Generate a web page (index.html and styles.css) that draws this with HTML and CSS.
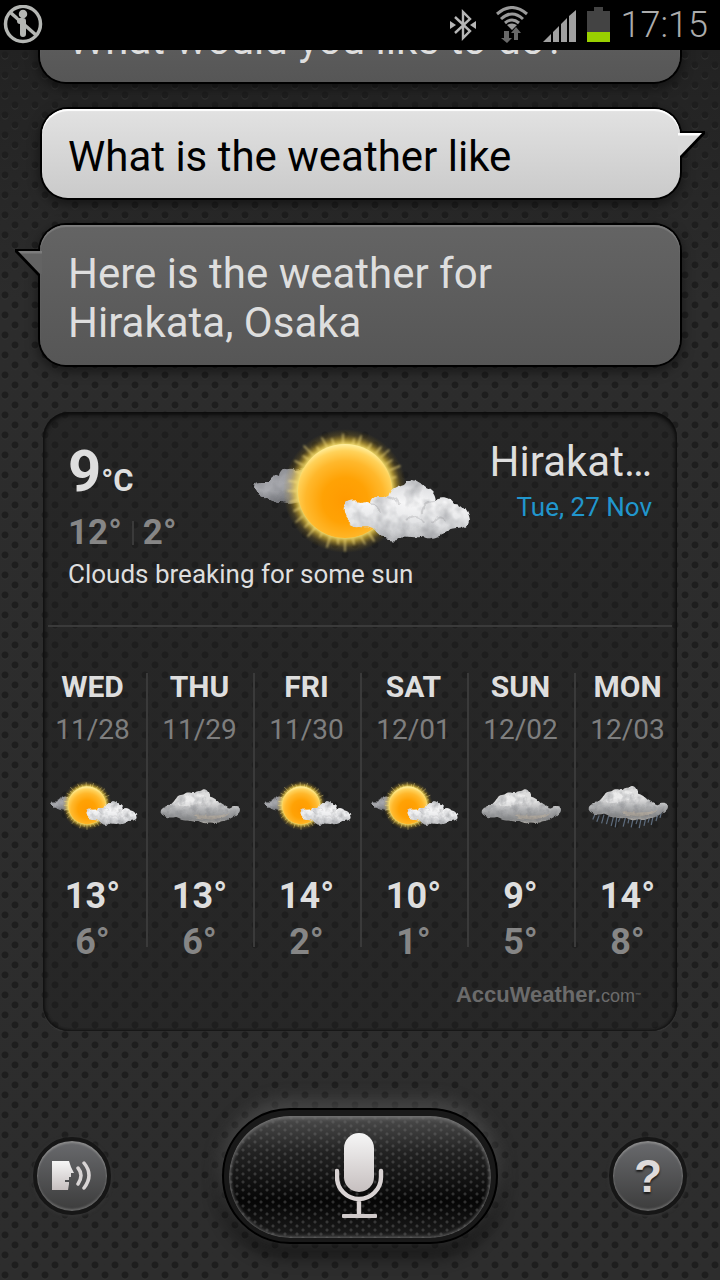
FILE: index.html
```html
<!DOCTYPE html>
<html lang="en">
<head>
    <meta charset="UTF-8">
    <meta name="viewport" content="width=device-width, initial-scale=1.0">
    <title>Voice assistant</title>
    <link rel="stylesheet" href="styles.css">
</head>
<body>
    <!-- shared weather icons -->
    <svg class="defs" width="0" height="0" aria-hidden="true">
        <defs>
            <radialGradient id="sun-fill" cx="0.5" cy="0.6" r="0.6">
                <stop offset="0" stop-color="#ff9a00"/>
                <stop offset="0.4" stop-color="#ffa205"/>
                <stop offset="0.7" stop-color="#ffb82c"/>
                <stop offset="0.88" stop-color="#ffd25a"/>
                <stop offset="1" stop-color="#fff0a0"/>
            </radialGradient>
            <radialGradient id="sun-glow">
                <stop offset="0.74" stop-color="#ffe97a" stop-opacity="1"/>
                <stop offset="0.82" stop-color="#f0c838" stop-opacity="0.6"/>
                <stop offset="0.91" stop-color="#c09820" stop-opacity="0.2"/>
                <stop offset="1" stop-color="#a08010" stop-opacity="0"/>
            </radialGradient>
            <linearGradient id="white-cloud" x1="0" y1="0" x2="0" y2="1">
                <stop offset="0" stop-color="#d6d7da"/>
                <stop offset="0.4" stop-color="#f6f6f7"/>
                <stop offset="0.75" stop-color="#e2e3e5"/>
                <stop offset="1" stop-color="#b4b5b8"/>
            </linearGradient>
            <linearGradient id="back-cloud" x1="0" y1="0" x2="0" y2="1">
                <stop offset="0" stop-color="#96979c"/>
                <stop offset="0.6" stop-color="#aaabb0"/>
                <stop offset="1" stop-color="#707176"/>
            </linearGradient>
            <linearGradient id="gray-cloud" gradientUnits="userSpaceOnUse" x1="0" y1="30" x2="0" y2="118">
                <stop offset="0" stop-color="#d8d8d8"/>
                <stop offset="0.35" stop-color="#e2e2e2"/>
                <stop offset="0.6" stop-color="#b0b1b3"/>
                <stop offset="0.85" stop-color="#8a8b8c"/>
                <stop offset="1" stop-color="#b4b0aa"/>
            </linearGradient>
            <filter id="fluff" x="-10%" y="-10%" width="120%" height="120%" color-interpolation-filters="sRGB">
                <feTurbulence type="fractalNoise" baseFrequency="0.06" numOctaves="3" seed="4" result="noise"/>
                <feDisplacementMap in="SourceGraphic" in2="noise" scale="8" xChannelSelector="R" yChannelSelector="G" result="rough"/>
                <feGaussianBlur in="rough" stdDeviation="0.6" result="shape"/>
                <feColorMatrix in="noise" type="matrix" values="0 0 0 0 0.45  0 0 0 0 0.46  0 0 0 0 0.48  0.9 0 0 0 -0.36" result="shade"/>
                <feComposite in="shade" in2="shape" operator="in" result="inner"/>
                <feMerge>
                    <feMergeNode in="shape"/>
                    <feMergeNode in="inner"/>
                </feMerge>
            </filter>
            <filter id="soft" x="-10%" y="-10%" width="120%" height="120%">
                <feGaussianBlur stdDeviation="0.8"/>
            </filter>
            <symbol id="partly-sunny" viewBox="0 0 240 140">
                <g filter="url(#fluff)" fill="url(#back-cloud)">
                    <path d="M13 68C14 60 22 61 28 61C30 55 37 56 40 58C41 50 50 47 54 50L64 48V82C56 82 48 86 42 83C35 84 30 78 26 77C20 78 13 74 13 68Z"/>
                </g>
                <circle cx="105" cy="71" r="62" fill="url(#sun-glow)"/>
                <g fill="none" stroke="#ffe888" stroke-width="1.5" stroke-linecap="round" opacity="0.7" filter="url(#soft)">
                    <path d="M103 24V14M113 25L114 19M118 26L121 16M128 29L131 24M136 33L141 27M141 37L149 30M146 44L152 40M150 50L160 46M152 58L156 57M94 25L92 19M87 27L82 18M79 30L77 27M73 35L64 26M68 39L63 36M63 45L55 41M60 53L55 51M57 62L49 61M56 71H48M57 80L50 82M60 88L54 91M63 96L56 102M69 103L65 107M75 108L68 116M82 113L80 117M90 117L87 127M98 119V124M105 120V131M113 119L114 124M121 117L125 124M129 113L134 121"/>
                </g>
                <circle cx="105" cy="71" r="47" fill="url(#sun-fill)"/>
                <g filter="url(#fluff)">
                    <path fill="url(#white-cloud)" d="M104 94C102 84 111 79 120 82C124 80 129 83 130 84C130 75 141 73 147 77C150 66 158 66 164 64C170 56 178 61 185 66C193 69 196 77 194 80C201 75 210 77 214 84C224 84 228 94 229 101C228 111 215 107 207 112C198 117 190 121 183 116C172 120 164 113 157 119C146 122 138 113 134 108C128 104 125 106 119 105C111 106 105 101 104 94Z"/>
                    <path fill="none" stroke="#a9aaad" stroke-width="2" opacity="0.4" d="M130 84C136 84 140 88 141 93M147 77C153 78 157 82 157 87M194 80C187 80 181 86 182 93M166 100C173 94 182 98 184 104M207 100C202 95 195 98 193 104"/>
                </g>
            </symbol>
            <symbol id="cloud-shape" viewBox="0 0 240 140">
                <g filter="url(#fluff)">
                    <path fill="url(#gray-cloud)" d="M22 89C20 78 34 75 40 70C50 70 56 58 62 51C66 43 78 47 84 40C94 36 101 43 108 39C114 32 120 38 127 31C138 28 142 40 144 49C155 51 162 58 169 65C180 68 185 77 195 76C205 70 220 72 220 82C220 93 205 98 196 104C186 112 176 109 169 113C158 117 149 112 142 114C132 119 122 113 114 109C104 114 96 108 86 109C73 108 69 101 59 100C46 104 25 100 22 89Z"/>
                    <path fill="#ffffff" opacity="0.4" d="M64 58C80 42 110 40 130 46C138 56 130 66 116 66C98 68 88 76 66 72Z"/>
                    <path fill="#c7b7a1" opacity="0.5" d="M104 98C120 92 138 100 156 96C172 97 182 92 194 90C184 104 166 102 150 107C136 104 120 106 104 98Z"/>
                </g>
            </symbol>
            <symbol id="cloudy" viewBox="0 0 240 140">
                <use href="#cloud-shape" width="240" height="140"/>
            </symbol>
            <symbol id="rain" viewBox="0 0 240 140">
                <path stroke="#71849b" stroke-width="3" opacity="0.75" d="M38 92L32 106M48 96L42 112M60 94L54 116M72 96L66 118M84 98L78 122M92 100L88 126M102 98L96 112M114 100L108 124M124 98L120 116M134 98L128 126M146 98L140 118M154 98L148 128M166 96L160 122M176 94L170 114M184 92L178 120M196 88L190 110M204 86L200 102"/>
                <use href="#cloud-shape" y="-8" width="240" height="140"/>
            </symbol>
            <linearGradient id="silver" x1="0" y1="0" x2="0" y2="1">
                <stop offset="0" stop-color="#f6f6f6"/>
                <stop offset="1" stop-color="#c6bfbf"/>
            </linearGradient>
        </defs>
    </svg>

    <header class="status-bar">
        <svg class="status-alert" width="40" height="40" viewBox="0 0 40 40" fill="none" stroke="#b4b6b3">
            <circle cx="20" cy="19" r="17.5" stroke-width="3.5"/>
            <path d="M8 8L33 30" stroke-width="3.5"/>
            <circle cx="20" cy="9" r="5" fill="#b4b6b3" stroke="#000" stroke-width="1.5"/>
            <path d="M17 16H20V29" stroke-width="6" stroke-linecap="round" stroke-linejoin="round"/>
        </svg>
        <svg width="34" height="36" viewBox="0 0 34 36" fill="none" stroke="#b6b6b6" stroke-width="2.4">
            <path d="M8 10L23 24L16 31V5L23 12L8 26"/>
            <path d="M3 14L9 18L3 22ZM29 14L23 18L29 22Z" fill="#b6b6b6" stroke="none"/>
        </svg>
        <svg width="42" height="38" viewBox="0 0 42 38" fill="none" stroke="#9a9a9a" stroke-width="3">
            <path d="M6 8Q21 -5 36 8M10 13Q21 3 32 13M14 17Q21 11 28 17"/>
            <path d="M16 19Q21 16 26 19L21 24Z" fill="#9a9a9a" stroke="none"/>
            <path d="M13 25H18V32H21L16 37L10 32H13ZM23 34V27H20L25 21L30 27H27V34Z" fill="#686868" stroke="none"/>
        </svg>
        <svg width="34" height="34" viewBox="0 0 34 34" fill="#a0a0a0">
            <path d="M0 34L8 26V34ZM10 24L16 18V34H10ZM18 16L24 10V34H18ZM26 8L33 2V34H26Z"/>
        </svg>
        <svg width="24" height="36" viewBox="0 0 24 36">
            <path d="M0 4H7V0H16V4H23V25H0Z" fill="#434343"/>
            <path d="M0 25H23V35H0Z" fill="#99d000"/>
        </svg>
        <time class="clock">17:15</time>
    </header>

    <main class="chat">
        <p class="bubble bubble-app">What would you like to do?</p>
        <p class="bubble bubble-user">What is the weather like</p>
        <p class="bubble bubble-app bubble-tail">Here is the weather for<br>Hirakata, Osaka</p>

        <section class="weather">
            <div class="today">
                <div class="temps">
                    <div class="now">9<span class="unit">°C</span></div>
                    <div class="range"><span>12°</span><span class="range-low">2°</span></div>
                </div>
                <svg class="today-icon" viewBox="0 0 240 140"><use href="#partly-sunny"/></svg>
                <div class="place">
                    <h1 class="city">Hirakat…</h1>
                    <div class="today-date">Tue, 27 Nov</div>
                </div>
                <p class="summary">Clouds breaking for some sun</p>
            </div>

            <div class="forecast">
                <div class="day">
                    <h2 class="day-name">WED</h2>
                    <div class="day-date">11/28</div>
                    <svg class="day-icon" viewBox="0 0 240 140"><use href="#partly-sunny"/></svg>
                    <div class="high">13°</div>
                    <div class="low">6°</div>
                </div>
                <div class="day">
                    <h2 class="day-name">THU</h2>
                    <div class="day-date">11/29</div>
                    <svg class="day-icon" viewBox="0 0 240 140"><use href="#cloudy"/></svg>
                    <div class="high">13°</div>
                    <div class="low">6°</div>
                </div>
                <div class="day">
                    <h2 class="day-name">FRI</h2>
                    <div class="day-date">11/30</div>
                    <svg class="day-icon" viewBox="0 0 240 140"><use href="#partly-sunny"/></svg>
                    <div class="high">14°</div>
                    <div class="low">2°</div>
                </div>
                <div class="day">
                    <h2 class="day-name">SAT</h2>
                    <div class="day-date">12/01</div>
                    <svg class="day-icon" viewBox="0 0 240 140"><use href="#partly-sunny"/></svg>
                    <div class="high">10°</div>
                    <div class="low">1°</div>
                </div>
                <div class="day">
                    <h2 class="day-name">SUN</h2>
                    <div class="day-date">12/02</div>
                    <svg class="day-icon" viewBox="0 0 240 140"><use href="#cloudy"/></svg>
                    <div class="high">9°</div>
                    <div class="low">5°</div>
                </div>
                <div class="day">
                    <h2 class="day-name">MON</h2>
                    <div class="day-date">12/03</div>
                    <svg class="day-icon" viewBox="0 0 240 140"><use href="#rain"/></svg>
                    <div class="high">14°</div>
                    <div class="low">8°</div>
                </div>
            </div>

            <div class="brand">AccuWeather.<span class="brand-com">com</span><span class="brand-tm">™</span></div>
        </section>
    </main>

    <footer class="controls">
        <button class="round-btn" type="button" aria-label="Voice feedback">
            <svg width="42" height="32" viewBox="0 0 42 32">
                <path d="M1 1H18L20 7L23 13H20V17H18V20H14V22H18V24L17 30H1Z" fill="url(#silver)"/>
                <path d="M27 8Q33 15 27 24M33 3Q43 15 33 28" fill="none" stroke="#d9d5d5" stroke-width="3.5" stroke-linecap="round"/>
            </svg>
        </button>
        <button class="mic-btn" type="button" aria-label="Speak">
            <span class="mic-face">
                <svg width="50" height="88" viewBox="0 0 50 88">
                    <rect x="9" y="0" width="30" height="59" rx="15" fill="url(#silver)"/>
                    <path d="M2 38V44A22 22 0 0 0 46 44V38M24 67V81" fill="none" stroke="#d9d3d3" stroke-width="4.4" stroke-linecap="round"/>
                    <rect x="7" y="81" width="35" height="4" rx="1" fill="#d0caca"/>
                </svg>
            </span>
        </button>
        <button class="round-btn" type="button" aria-label="Help">?</button>
    </footer>
</body>
</html>
```

FILE: styles.css
```css
* {
    box-sizing: border-box;
}

body {
    display: flex;
    flex-direction: column;
    height: 100vh;
    margin: 0;
    overflow: hidden;
    font-family: Roboto, sans-serif;
    color: #dedede;
    background:
        radial-gradient(circle at 5px 15px, #1e1e1e 3px, transparent 4px) 0 0 / 20px 20px,
        radial-gradient(circle at 15px 5px, #1e1e1e 3px, transparent 4px) 0 0 / 20px 20px,
        radial-gradient(circle at 5px 16px, #333 3px, transparent 4px) 0 0 / 20px 20px,
        radial-gradient(circle at 15px 6px, #333 3px, transparent 4px) 0 0 / 20px 20px,
        linear-gradient(#222 50px, #2c2c2c 300px, #2d2d2d);
}

h1, h2, p {
    margin: 0;
}

.defs {
    position: absolute;
}

/* status bar */
.status-bar {
    display: flex;
    align-items: center;
    gap: 10px;
    flex: none;
    height: 50px;
    padding: 0 12px 0 3px;
    background: #000;
}

.status-alert {
    margin-right: auto;
}

.clock {
    font-size: 36px;
    line-height: 42px;
    font-weight: 300;
    color: #acacac;
}

/* conversation */
.chat {
    display: flex;
    flex-direction: column;
    justify-content: flex-end;
    gap: 27px;
    flex: 1;
    min-height: 0;
    padding: 0 40px;
    overflow: hidden;
}

.bubble {
    position: relative;
    padding: 24px 28px 18px;
    border-radius: 26px;
    font-size: 42px;
    line-height: 49px;
}

.bubble-app {
    background: linear-gradient(#646464, #565656);
    box-shadow: 0 0 0 2px #000, inset 0 2px 1px #7c7c7c, 0 4px 12px 2px rgba(0, 0, 0, 0.5);
}

.bubble-user {
    margin-left: 2px;
    padding: 23px 26px 17px;
    color: #000;
    background: linear-gradient(#e2e2e2, #cacaca);
    box-shadow: 0 0 0 2px #000, inset 0 2px 1px #fff, 0 4px 12px 2px rgba(0, 0, 0, 0.5);
}

.bubble-user::before,
.bubble-user::after,
.bubble-tail::before,
.bubble-tail::after {
    content: "";
    position: absolute;
}

.bubble-user::before {
    top: 22px;
    right: -25px;
    width: 25px;
    height: 29px;
    background: #000;
    clip-path: polygon(0 0, 100% 0, 100% 3px, 0 100%);
}

.bubble-user::after {
    top: 24px;
    right: -22px;
    width: 24px;
    height: 24px;
    background: linear-gradient(#fff 2px, #d9d9d9 3px);
    clip-path: polygon(0 0, 100% 0, 2px 23px, 0 23px);
}

.bubble-tail::before {
    top: 24px;
    left: -25px;
    width: 25px;
    height: 29px;
    background: #000;
    clip-path: polygon(0 0, 100% 0, 100% 100%, 0 3px);
}

.bubble-tail::after {
    top: 26px;
    left: -22px;
    width: 24px;
    height: 24px;
    background: linear-gradient(#7c7c7c 2px, #636363 3px);
    clip-path: polygon(0 0, 100% 0, 100% 23px, 22px 23px);
}

/* weather card */
.weather {
    margin: 20px 3px 0;
    padding-top: 8px;
    border-radius: 26px;
    background: rgba(30, 30, 30, 0.4);
    box-shadow: inset 0 3px 5px #0c0c0c, inset 1px 0 3px #111, inset -1px 0 3px #111, 0 2px 0 #343434;
}

.today {
    display: grid;
    grid-template-columns: 1fr 240px 1fr;
    margin: 0 5px;
    padding: 0 20px 37px;
    border-bottom: 2px solid #3a3a3a;
}

.today-icon {
    width: 240px;
    height: 140px;
}

.temps {
    padding-top: 21px;
    font-weight: 700;
}

.now {
    font-size: 58px;
    line-height: 60px;
}

.unit {
    font-size: 31px;
}

.range {
    display: flex;
    align-items: center;
    margin-top: 2px;
    font-size: 35px;
    line-height: 40px;
    color: #868686;
}

.range-low {
    margin-left: 10px;
    padding-left: 11px;
    background: linear-gradient(#3a3a3a, #3a3a3a) no-repeat left center / 2px 24px;
}

.place {
    padding-top: 17px;
    text-align: right;
    white-space: nowrap;
}

.city {
    font-size: 42px;
    line-height: 50px;
    font-weight: 400;
}

.today-date {
    margin-top: 5px;
    font-size: 26px;
    line-height: 30px;
    color: #2196cd;
}

.summary {
    grid-column: 1 / -1;
    font-size: 26px;
    line-height: 28px;
}

.forecast {
    display: grid;
    grid-template-columns: repeat(6, 1fr);
    margin: 46px -4px 0;
}

.day {
    text-align: center;
}

.day + .day {
    background: linear-gradient(#3a3a3a, #3a3a3a) no-repeat left top / 2px 274px;
}

.day-name {
    font-size: 30px;
    line-height: 28px;
    font-weight: 700;
}

.day-date {
    margin-top: 13px;
    font-size: 28px;
    line-height: 32px;
    color: #7e7e7e;
}

.day-icon {
    display: block;
    width: 96px;
    height: 56px;
    margin: 31px auto 41px;
}

.high,
.low {
    font-size: 36px;
    line-height: 44px;
    font-weight: 700;
}

.low {
    margin-top: 2px;
    color: #868686;
}

.brand {
    padding: 18px 36px 22px;
    font-family: "Liberation Sans", sans-serif;
    font-size: 22px;
    line-height: 26px;
    font-weight: 700;
    text-align: right;
    color: #6b6b6b;
}

.brand-com {
    font-size: 18px;
    font-weight: 400;
}

.brand-tm {
    font-size: 6px;
    vertical-align: top;
}

/* bottom buttons */
.controls {
    display: flex;
    align-items: center;
    justify-content: space-between;
    flex: none;
    padding: 77px 33px 36px;
}

.round-btn {
    display: flex;
    align-items: center;
    justify-content: center;
    width: 78px;
    height: 78px;
    padding: 0;
    border: 4px solid #161616;
    border-radius: 50%;
    font-family: "Liberation Sans", sans-serif;
    font-size: 46px;
    line-height: 46px;
    font-weight: 700;
    color: #dedada;
    text-shadow: 0 2px 2px #1a1a1a;
    background: linear-gradient(#696a6d, #3c3c3c);
    box-shadow: inset 0 2px 2px #8b8b8b, inset 0 -2px 2px #666, 0 1px 3px 1px #333;
}

.mic-btn {
    width: 276px;
    height: 136px;
    padding: 6px 5px 4px;
    border: 2px solid #000;
    border-radius: 68px;
    background: #191919;
    box-shadow: 0 -6px 16px 2px rgba(90, 90, 90, 0.6), 0 10px 16px 4px rgba(0, 0, 0, 0.45);
}

.mic-face {
    display: flex;
    align-items: center;
    justify-content: center;
    height: 100%;
    border-radius: 62px;
    background:
        radial-gradient(circle at 2px 2px, rgba(110, 110, 110, 0.4) 1px, transparent 2px) 0 0 / 12px 8px,
        radial-gradient(circle at 8px 6px, rgba(110, 110, 110, 0.4) 1px, transparent 2px) 0 0 / 12px 8px,
        linear-gradient(#4c4c4c, #222 30%, #060606 70%, #1c1c1c);
    box-shadow: inset 0 2px 4px #777, inset 0 -1px 4px #666;
}
```
